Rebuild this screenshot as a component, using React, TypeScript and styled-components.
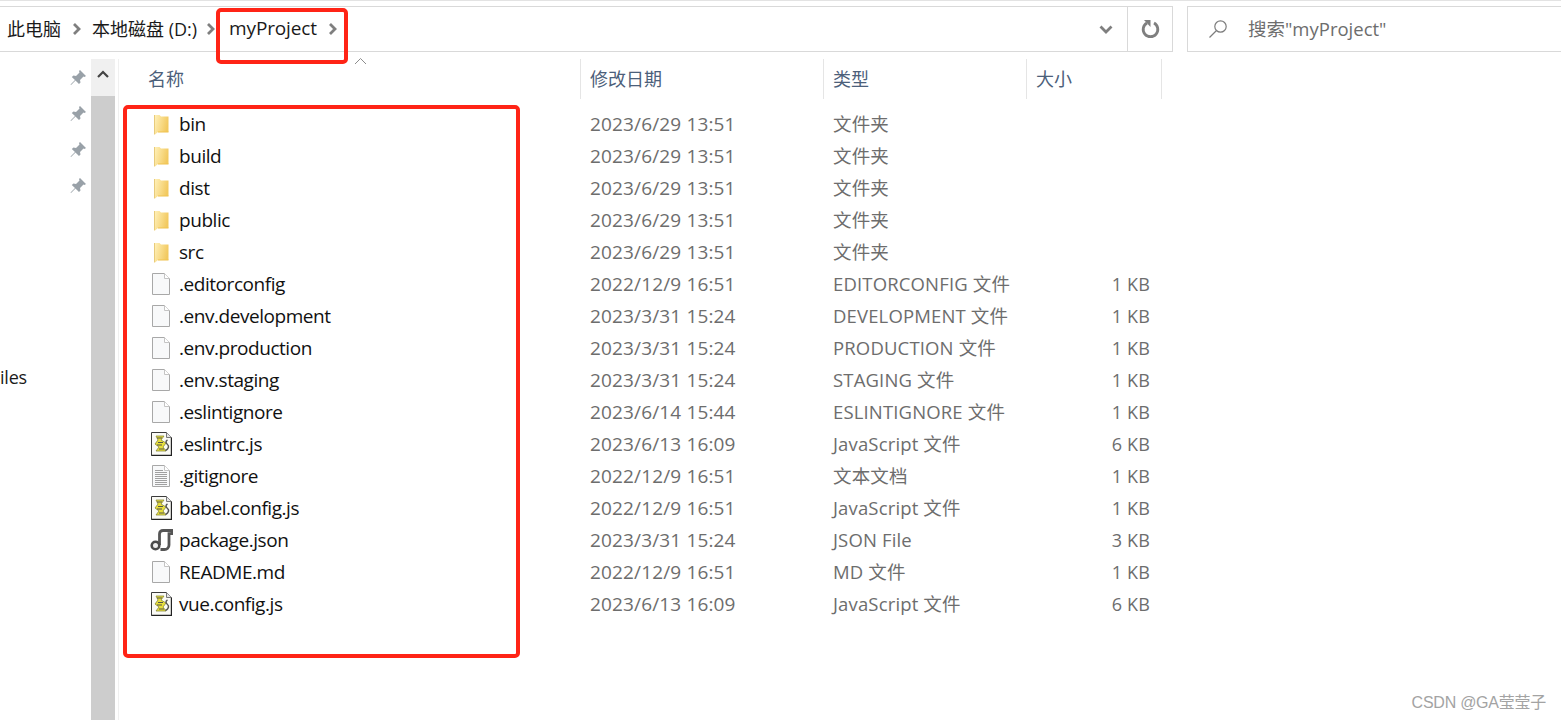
import React from 'react';
import styled, { createGlobalStyle } from 'styled-components';

const GlobalStyle = createGlobalStyle`
  html, body {
    margin: 0;
    padding: 0;
    background: #fff;
    overflow: hidden;
  }
  body {
    font-family: "Open Sans", "Noto Sans CJK SC", sans-serif;
  }
`;

const Window = styled.div`
  position: relative;
  width: 1561px;
  height: 720px;
  overflow: hidden;
  background: #fff;
  padding-top: 6px;
  box-sizing: border-box;
  border-top: 1px solid #e3e3e3;
`;

const TopBar = styled.div`
  display: flex;
  height: 46px;
  margin-top: -1px;
`;

const AddressBox = styled.div`
  flex: 0 0 1173px;
  display: flex;
  align-items: center;
  box-sizing: border-box;
  border: 1px solid #d9d9d9;
  border-left: 0;
`;

const Crumbs = styled.div`
  flex: 1;
  display: flex;
  align-items: center;
  padding: 0 0 2px 7px;
`;

const Crumb = styled.span`
  font-size: 18px;
  color: #1a1a1a;
  white-space: nowrap;
`;

const CurrentCrumb = styled(Crumb)`
  font-size: 19px;
  letter-spacing: -0.15px;
`;

const CrumbArrow = styled.svg<{ $left: number; $right: number }>`
  width: 10px;
  height: 14px;
  margin: 2px ${(p) => p.$right}px 0 ${(p) => p.$left}px;
`;

const AddressDrop = styled.div`
  width: 44px;
  height: 100%;
  display: flex;
  align-items: center;
  justify-content: center;
  padding-left: 1px;
  box-sizing: border-box;
`;

const RefreshButton = styled.div`
  width: 45px;
  height: 100%;
  display: flex;
  align-items: center;
  justify-content: center;
  border-left: 1px solid #d9d9d9;
  box-sizing: border-box;
`;

const SearchBox = styled.div`
  flex: 1;
  margin-left: 14px;
  display: flex;
  align-items: center;
  box-sizing: border-box;
  border: 1px solid #d9d9d9;
  border-right: 0;
  padding-left: 20px;
`;

const SearchText = styled.span`
  margin: 0 0 2px 20px;
  font-size: 18.5px;
  color: #6d6d6d;
`;

const Body = styled.div`
  display: flex;
  height: 661px;
  margin-top: 7px;
`;

const Sidebar = styled.div`
  flex: 0 0 91px;
  position: relative;
  display: flex;
  flex-direction: column;
  align-items: flex-end;
  padding: 11px 5px 0 0;
  box-sizing: border-box;
  gap: 20px;
`;

const SideLabel = styled.span`
  position: absolute;
  left: 0;
  top: 306px;
  font-size: 18px;
  letter-spacing: -0.2px;
  color: #1a1a1a;
`;

const Scrollbar = styled.div`
  flex: 0 0 24px;
  display: flex;
  flex-direction: column;
  background: #cdcdcd;
`;

const ScrollUp = styled.div`
  height: 37px;
  background: #f0f0f0;
  display: flex;
  justify-content: center;
  padding-top: 11px;
  box-sizing: border-box;
`;

const Gutter = styled.div`
  flex: 0 0 3px;
  border-right: 1px solid #f0f0f0;
`;

const Content = styled.div`
  flex: 1;
  position: relative;
`;

const SortArrow = styled.svg`
  position: absolute;
  left: 235px;
  top: -2px;
  width: 13px;
  height: 8px;
`;

const columns = '462px 243px 203px 135px';

const HeaderRow = styled.div`
  display: grid;
  grid-template-columns: ${columns};
  height: 40px;
  margin-bottom: 9px;
`;

const HeaderCell = styled.div<{ $pad: number }>`
  display: flex;
  align-items: center;
  padding: 0 0 2px ${(p) => p.$pad}px;
  font-size: 18px;
  color: #4c607a;
  border-right: 1px solid #e5e5e5;
`;

const Row = styled.div`
  display: grid;
  grid-template-columns: ${columns};
  height: 32px;
  align-items: center;
`;

const NameCell = styled.div`
  display: flex;
  align-items: center;
  padding-left: 30px;
`;

const IconSlot = styled.div`
  width: 24px;
  height: 24px;
  margin-right: 6px;
  display: flex;
  align-items: center;
  justify-content: center;
  flex-shrink: 0;
`;

const FileName = styled.span`
  font-size: 19px;
  color: #111;
  letter-spacing: -0.45px;
  white-space: nowrap;
`;

const InfoCell = styled.div`
  padding-left: 9px;
  font-size: 19px;
  color: #6d6d6d;
  letter-spacing: 0.15px;
  white-space: nowrap;
`;

const TypeCell = styled(InfoCell)`
  font-size: 18.5px;
  padding-bottom: 2px;
`;

const SizeCell = styled(InfoCell)`
  padding: 0 12px 0 0;
  font-size: 18px;
  text-align: right;
`;

const RedBox = styled.div<{ $x: number; $y: number; $w: number; $h: number }>`
  position: absolute;
  left: ${(p) => p.$x}px;
  top: ${(p) => p.$y}px;
  width: ${(p) => p.$w}px;
  height: ${(p) => p.$h}px;
  box-sizing: border-box;
  border: 4px solid #ff2416;
  border-radius: 5px;
  pointer-events: none;
`;

const Watermark = styled.span`
  position: absolute;
  right: 15px;
  bottom: 7px;
  font-family: "Liberation Sans", "Noto Sans CJK SC", sans-serif;
  font-size: 16px;
  letter-spacing: -0.25px;
  color: #a3a3a3;
`;

type Kind = 'folder' | 'file' | 'text' | 'script' | 'package';

const FolderIcon = () => (
  <svg width="15" height="21" viewBox="0 0 15 21">
    <defs>
      <linearGradient id="folderFill" x1="0" y1="0" x2="1" y2="0.3">
        <stop offset="0" stopColor="#fff0b8" />
        <stop offset="1" stopColor="#f2c95f" />
      </linearGradient>
    </defs>
    <path d="M1 1h4.500l1.500 1.500h7.500V18H4l-3 2.500z" fill="url(#folderFill)" />
    <path d="M.5 1v19.500" stroke="#e8cb7b" />
    <path d="M4 18h10.500" stroke="#f0c24f" />
  </svg>
);

const BlankIcon = ({ lines }: { lines?: boolean }) => (
  <svg width="18" height="22" viewBox="0 0 18 22">
    <path d="M.5.5h12l5 5v16H.5z" fill="#f8f9fa" stroke="#a8a8a8" />
    <path d="M12.500.5v5h5" fill="#fff" stroke="#c4c4c4" />
    {lines &&
      [5, 7, 9, 11, 13, 15, 17, 19].map((y) => (
        <path key={y} d={`M3 ${y + 0.5}h${y === 5 ? 8 : 12}`} stroke="#a0a0a0" />
      ))}
  </svg>
);

const ScriptIcon = () => (
  <svg width="21" height="24" viewBox="0 0 21 24">
    <path d="M.5.5h15l5 5v18H.5z" fill="#fbfbf6" stroke="#3c3c3c" />
    <path d="M.5 23.500h20v-18" fill="none" stroke="#222" strokeWidth="1.400" />
    <path d="M15.500.5v5h5" fill="#e5e5e5" stroke="#777" />
    <path d="M5 4h8l-3 4 5 3-3 4 3 4H5l3-4-4-3 3-4z" fill="#e8df3c" stroke="#8c8a3a" strokeWidth="0.8" />
    <path d="M6 6h5M7 10.500h5M6 13h5M8 17h5" stroke="#55554a" strokeWidth="1" />
    <path d="M16.500 8c-2 1-2 3 0 4.500s1 4.500-2 6" fill="none" stroke="#555" strokeWidth="1.500" />
  </svg>
);

const PackageIcon = () => (
  <svg width="23" height="22" viewBox="0 0 23 22">
    <path d="M9.500 16V5c0-2.500 1.500-3.500 3.500-3.500h9v3.200h-3V16c0 2.800-2 4.500-4.500 4.500h-4" fill="none" stroke="#555" strokeWidth="2.800" />
    <circle cx="5.500" cy="16.500" r="3.800" fill="#eee" stroke="#4a4a4a" strokeWidth="2.600" />
  </svg>
);

const icons: Record<Kind, React.ReactNode> = {
  folder: <FolderIcon />,
  file: <BlankIcon />,
  text: <BlankIcon lines />,
  script: <ScriptIcon />,
  package: <PackageIcon />,
};

const PinIcon = () => (
  <svg width="16" height="16" viewBox="0 0 16 16">
    <path d="M10 0l6 6-1.500 1-1-.5L10 10l.5 2.500L9 14 5.500 10.500 1 15l-.5-.5L5 10 1.800 7 3.500 5.500 6 6l3.500-3.500L9 1z" fill="#99a1a8" />
  </svg>
);

const ArrowGlyph = () => (
  <path d="M2 2l5 5-5 5" fill="none" stroke="#7f7f7f" strokeWidth="2.800" />
);

const files: { name: string; kind: Kind; date: string; type: string; size?: string }[] = [
  { name: 'bin', kind: 'folder', date: '2023/6/29 13:51', type: '文件夹' },
  { name: 'build', kind: 'folder', date: '2023/6/29 13:51', type: '文件夹' },
  { name: 'dist', kind: 'folder', date: '2023/6/29 13:51', type: '文件夹' },
  { name: 'public', kind: 'folder', date: '2023/6/29 13:51', type: '文件夹' },
  { name: 'src', kind: 'folder', date: '2023/6/29 13:51', type: '文件夹' },
  { name: '.editorconfig', kind: 'file', date: '2022/12/9 16:51', type: 'EDITORCONFIG 文件', size: '1 KB' },
  { name: '.env.development', kind: 'file', date: '2023/3/31 15:24', type: 'DEVELOPMENT 文件', size: '1 KB' },
  { name: '.env.production', kind: 'file', date: '2023/3/31 15:24', type: 'PRODUCTION 文件', size: '1 KB' },
  { name: '.env.staging', kind: 'file', date: '2023/3/31 15:24', type: 'STAGING 文件', size: '1 KB' },
  { name: '.eslintignore', kind: 'file', date: '2023/6/14 15:44', type: 'ESLINTIGNORE 文件', size: '1 KB' },
  { name: '.eslintrc.js', kind: 'script', date: '2023/6/13 16:09', type: 'JavaScript 文件', size: '6 KB' },
  { name: '.gitignore', kind: 'text', date: '2022/12/9 16:51', type: '文本文档', size: '1 KB' },
  { name: 'babel.config.js', kind: 'script', date: '2022/12/9 16:51', type: 'JavaScript 文件', size: '1 KB' },
  { name: 'package.json', kind: 'package', date: '2023/3/31 15:24', type: 'JSON File', size: '3 KB' },
  { name: 'README.md', kind: 'file', date: '2022/12/9 16:51', type: 'MD 文件', size: '1 KB' },
  { name: 'vue.config.js', kind: 'script', date: '2023/6/13 16:09', type: 'JavaScript 文件', size: '6 KB' },
];

export default function App() {
  return (
    <Window>
      <GlobalStyle />
      <TopBar>
        <AddressBox>
          <Crumbs>
            <Crumb>此电脑</Crumb>
            <CrumbArrow $left={11} $right={10} viewBox="0 0 10 14"><ArrowGlyph /></CrumbArrow>
            <Crumb>本地磁盘 (D:)</Crumb>
            <CrumbArrow $left={9} $right={13} viewBox="0 0 10 14"><ArrowGlyph /></CrumbArrow>
            <CurrentCrumb>myProject</CurrentCrumb>
            <CrumbArrow $left={11} $right={0} viewBox="0 0 10 14"><ArrowGlyph /></CrumbArrow>
          </Crumbs>
          <AddressDrop>
            <svg width="14" height="9" viewBox="0 0 14 9">
              <path d="M1.500 1.500L7 7l5.500-5.500" fill="none" stroke="#7f7f7f" strokeWidth="2.800" />
            </svg>
          </AddressDrop>
          <RefreshButton>
            <svg width="19" height="20" viewBox="0 0 19 20">
              <path d="M13 4a7.300 7.300 0 1 1-7 0" fill="none" stroke="#7f7f7f" strokeWidth="2.800" />
              <path d="M3 1h6.500v7z" fill="#7f7f7f" />
            </svg>
          </RefreshButton>
        </AddressBox>
        <SearchBox>
          <svg width="20" height="20" viewBox="0 0 20 20">
            <circle cx="12.500" cy="7.500" r="5.700" fill="none" stroke="#7d7d7d" strokeWidth="1.200" />
            <path d="M8.500 11.500L1.500 18.500" stroke="#7d7d7d" strokeWidth="1.200" />
          </svg>
          <SearchText>搜索"myProject"</SearchText>
        </SearchBox>
      </TopBar>
      <Body>
        <Sidebar>
          {[0, 1, 2, 3].map((i) => <PinIcon key={i} />)}
          <SideLabel>iles</SideLabel>
        </Sidebar>
        <Scrollbar>
          <ScrollUp>
            <svg width="12" height="8" viewBox="0 0 12 8">
              <path d="M1 7l5-5 5 5" fill="none" stroke="#444" strokeWidth="2.200" />
            </svg>
          </ScrollUp>
        </Scrollbar>
        <Gutter />
        <Content>
          <SortArrow viewBox="0 0 13 8">
            <path d="M1 7l5.500-5.500L12 7" fill="none" stroke="#8c8c8c" strokeWidth="1" />
          </SortArrow>
          <HeaderRow>
            <HeaderCell $pad={29}>名称</HeaderCell>
            <HeaderCell $pad={9}>修改日期</HeaderCell>
            <HeaderCell $pad={9}>类型</HeaderCell>
            <HeaderCell $pad={9}>大小</HeaderCell>
          </HeaderRow>
          {files.map((f) => (
            <Row key={f.name}>
              <NameCell>
                <IconSlot>{icons[f.kind]}</IconSlot>
                <FileName>{f.name}</FileName>
              </NameCell>
              <InfoCell>{f.date}</InfoCell>
              <TypeCell>{f.type}</TypeCell>
              <SizeCell>{f.size}</SizeCell>
            </Row>
          ))}
        </Content>
      </Body>
      <RedBox $x={216} $y={7} $w={132} $h={56} />
      <RedBox $x={123} $y={104} $w={397} $h={553} />
      <Watermark>CSDN @GA莹莹子</Watermark>
    </Window>
  );
}
